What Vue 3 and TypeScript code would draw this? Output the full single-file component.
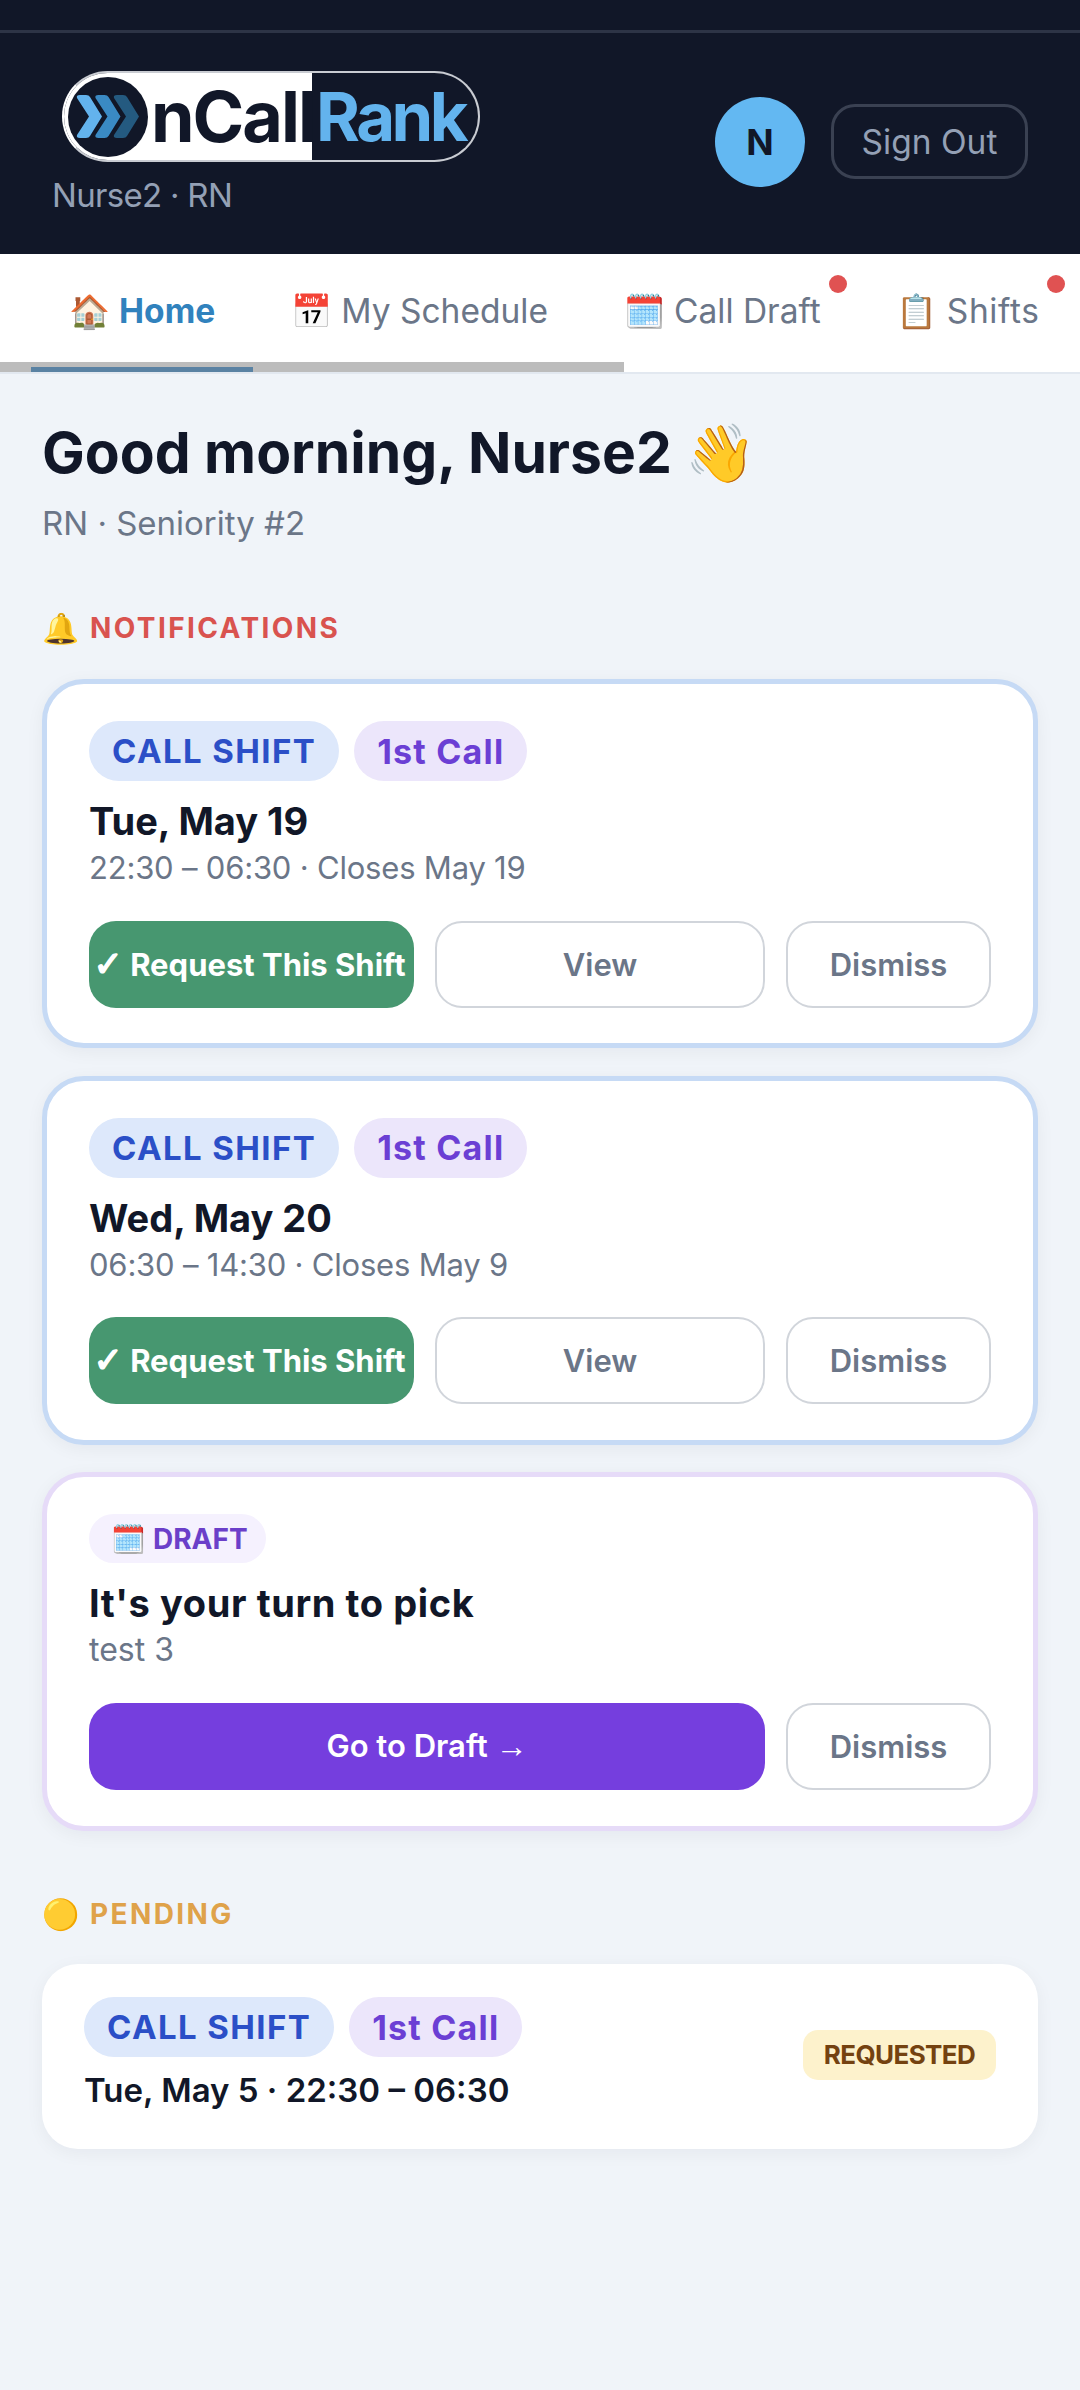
<script setup lang="ts">
interface Shift { date: string; meta: string }
const tabs = [
  { icon: '🏠', label: 'Home', active: true, dot: false },
  { icon: '📅', label: 'My Schedule', active: false, dot: false },
  { icon: '🗓️', label: 'Call Draft', active: false, dot: true },
  { icon: '📋', label: 'Shifts', active: false, dot: true },
]
const shifts: Shift[] = [
  { date: 'Tue, May 19', meta: '22:30 – 06:30 · Closes May 19' },
  { date: 'Wed, May 20', meta: '06:30 – 14:30 · Closes May 9' },
]
const chevron = 'M1 4 Q0 1 4 1 H10 Q13 1 14 3 L26 22.5 L14 42 Q13 44 10 44 H4 Q0 44 1 41 L13 22.5 Z'
</script>

<template>
  <div class="app">
    <div class="status"></div>
    <header class="header">
      <div class="brand">
        <div class="logo">
          <div class="logo-light">
            <span class="logo-mark">
              <svg width="64" height="45" viewBox="0 0 64 45">
                <path :d="chevron" transform="translate(37 0)" fill="#245a80" />
                <path :d="chevron" transform="translate(18.5 0)" fill="#3a8ac4" />
                <path :d="chevron" fill="#63b3ed" />
              </svg>
            </span>
            <span class="logo-call">nCall</span>
          </div>
          <span class="logo-rank">Rank</span>
        </div>
        <div class="who">Nurse2 · RN</div>
      </div>
      <div class="account">
        <div class="avatar">N</div>
        <button class="signout">Sign Out</button>
      </div>
    </header>

    <nav class="tabs">
      <div v-for="t in tabs" :key="t.label" class="tab" :class="{ active: t.active }">
        <span class="tab-icon">{{ t.icon }}</span>
        <span>{{ t.label }}</span>
        <i v-if="t.dot" class="dot"></i>
      </div>
      <div class="thumb"></div>
    </nav>

    <main class="main">
      <h1 class="hello">Good morning, Nurse2 <span class="wave">👋</span></h1>
      <p class="seniority">RN · Seniority #2</p>

      <h2 class="section red"><span class="section-icon">🔔</span>NOTIFICATIONS</h2>

      <section v-for="s in shifts" :key="s.date" class="card blue">
        <div class="pills">
          <span class="pill pill-type">CALL SHIFT</span>
          <span class="pill pill-call">1st Call</span>
        </div>
        <div class="title">{{ s.date }}</div>
        <div class="meta">{{ s.meta }}</div>
        <div class="actions">
          <button class="btn green"><span class="check">✓</span> Request This Shift</button>
          <button class="btn ghost view">View</button>
          <button class="btn ghost dismiss">Dismiss</button>
        </div>
      </section>

      <section class="card violet">
        <div class="pills">
          <span class="pill-draft"><span class="draft-icon">🗓️</span>DRAFT</span>
        </div>
        <div class="title draft-title">It's your turn to pick</div>
        <div class="meta draft-meta">test 3</div>
        <div class="actions">
          <button class="btn purple">Go to Draft <span class="arrow">→</span></button>
          <button class="btn ghost dismiss">Dismiss</button>
        </div>
      </section>

      <h2 class="section amber"><span class="section-icon">🟡</span>PENDING</h2>

      <section class="pending">
        <div>
          <div class="pills">
            <span class="pill pill-type">CALL SHIFT</span>
            <span class="pill pill-call">1st Call</span>
          </div>
          <div class="pending-title">Tue, May 5 · 22:30 – 06:30</div>
        </div>
        <span class="requested">REQUESTED</span>
      </section>
    </main>
  </div>
</template>

<style scoped>
.app {
  min-height: 2390px;
  background: #f0f4f9;
  font-family: Inter, "Noto Sans", "Noto Color Emoji", sans-serif;
  color: #111827;
  overflow: hidden;
}
.status {
  height: 30px;
  background: #111728;
  border-bottom: 3px solid #2d3446;
}
.header {
  height: 221px;
  background: #111728;
  display: flex;
  justify-content: space-between;
  align-items: center;
  padding: 0 52px;
  box-sizing: border-box;
}
.brand {
  align-self: flex-start;
  padding-top: 38px;
  display: flex;
  flex-direction: column;
}
.logo {
  margin-left: 10px;
  width: 418px;
  height: 91px;
  box-sizing: border-box;
  border: 2px solid #c9ccd2;
  border-left-color: #fff;
  border-radius: 46px;
  overflow: hidden;
  display: flex;
  align-items: center;
}
.logo-light {
  width: 248px;
  height: 100%;
  background: #fff;
  display: flex;
  align-items: center;
  padding-left: 4px;
  box-sizing: border-box;
  flex: none;
}
.logo-mark {
  width: 80px;
  height: 80px;
  border-radius: 50%;
  background: #111728;
  display: flex;
  align-items: center;
  justify-content: center;
  flex: none;
}
.logo-call, .logo-rank {
  font-size: 70px;
  font-weight: 700;
  line-height: 1;
  letter-spacing: -2px;
}
.logo-call { color: #111728; margin-left: 3px; }
.logo-rank { color: #63b3ed; margin-left: 4px; font-size: 67px; letter-spacing: -3.5px; }
.who {
  margin-top: 13px;
  font-size: 33px;
  line-height: 40px;
  letter-spacing: -0.7px;
  color: #94a0b5;
}
.account { display: flex; align-items: center; gap: 26px; margin-top: -4px; }
.avatar {
  width: 90px;
  height: 90px;
  border-radius: 50%;
  background: #63b8f2;
  color: #111728;
  font-size: 36px;
  font-weight: 700;
  display: flex;
  align-items: center;
  justify-content: center;
}
.signout {
  width: 197px;
  height: 75px;
  border: 3px solid #3a4152;
  border-radius: 24px;
  background: transparent;
  color: #94a0b5;
  font: 400 33.5px Inter, sans-serif;
  padding: 0;
}
.tabs {
  position: relative;
  height: 120px;
  background: #fff;
  border-bottom: 2px solid #e2e8f0;
  display: flex;
  padding-left: 31px;
  box-sizing: border-box;
  overflow: hidden;
}
.tab {
  position: relative;
  flex: none;
  height: 118px;
  box-sizing: border-box;
  padding: 0 38px 5px;
  display: flex;
  align-items: center;
  gap: 9px;
  font-size: 33.5px;
  color: #6b7688;
  white-space: nowrap;
}
.tab:nth-child(4) { letter-spacing: 0.6px; }
.tab-icon { font-size: 33px; letter-spacing: 0; }
.tab.active { color: #3182bd; font-weight: 700; }
.tab.active::after {
  content: "";
  position: absolute;
  left: 0;
  right: 0;
  bottom: 0;
  height: 5px;
  background: #5a82a3;
  z-index: 2;
}
.dot {
  position: absolute;
  top: 21px;
  right: 12px;
  width: 18px;
  height: 18px;
  border-radius: 50%;
  background: #e05252;
}
.thumb {
  position: absolute;
  left: 0;
  bottom: 0;
  width: 624px;
  height: 10px;
  background: #bcbcbc;
}
.main { padding: 0 42px; }
.hello {
  margin: 0;
  padding-top: 42px;
  font-size: 57px;
  line-height: 74px;
  font-weight: 700;
  color: #111728;
}
.wave { font-size: 57px; }
.seniority {
  margin: 12px 0 0;
  font-size: 33px;
  line-height: 42px;
  color: #6b7688;
}
.section {
  display: flex;
  align-items: center;
  margin: 0;
  font-size: 28px;
  font-weight: 700;
  letter-spacing: 2.4px;
  line-height: 40px;
}
.section-icon { width: 48px; font-size: 30px; letter-spacing: 0; }
.red { color: #d9534f; margin-top: 64px; margin-bottom: 31px; }
.amber { color: #dfa24a; margin-top: 63px; margin-bottom: 30px; }
.card {
  background: #fff;
  border: 5px solid;
  border-radius: 42px;
  box-sizing: border-box;
  padding: 37px 42px 34px;
  margin-bottom: 27.5px;
  box-shadow: 0 4px 18px rgba(17, 24, 39, 0.05);
}
.blue { border-color: #c6daf5; height: 369px; }
.violet { border-color: #e6dbf8; height: 359px; margin-bottom: 0; }
.pills { display: flex; gap: 15px; }
.pill {
  height: 60px;
  border-radius: 30px;
  box-sizing: border-box;
  padding: 0 23px;
  display: inline-flex;
  align-items: center;
  font-size: 33px;
  font-weight: 700;
}
.pill-type { background: #dde8fb; color: #2b4fc7; letter-spacing: 1.4px; }
.pill-call { background: #ece6fb; color: #6b3fd4; font-size: 34px; letter-spacing: 1.2px; }
.pill-draft {
  height: 49px;
  width: 177px;
  border-radius: 25px;
  box-sizing: border-box;
  padding-left: 22px;
  background: #f5f1fe;
  color: #6b3fc9;
  display: inline-flex;
  align-items: center;
  font-size: 28px;
  font-weight: 700;
}
.draft-icon { width: 42px; font-size: 28px; }
.title {
  margin-top: 13px;
  font-size: 38px;
  line-height: 54px;
  font-weight: 700;
  color: #111728;
}
.draft-title { letter-spacing: 0.6px; }
.meta {
  margin-top: 1px;
  font-size: 31px;
  line-height: 38px;
  letter-spacing: -0.2px;
  color: #6b7688;
}
.draft-meta { font-size: 32px; letter-spacing: 0; }
.actions { display: flex; gap: 21px; margin-top: 33.5px; }
.btn {
  height: 87px;
  border-radius: 27px;
  border: 0;
  padding: 0;
  box-sizing: border-box;
  font: 600 31px Inter, "Noto Sans", sans-serif;
  flex: none;
}
.green { width: 325px; background: #479770; color: #fff; font-weight: 700; white-space: nowrap; }
.check {
  font-family: "DejaVu Sans", sans-serif;
  font-size: 35px;
  line-height: 1;
  -webkit-text-stroke: 1.6px #fff;
  margin-left: -4px;
}
.arrow { font-family: "Liberation Sans", sans-serif; font-size: 32px; }
.purple { width: 676px; background: #753ede; color: #fff; }
.ghost { background: #fff; border: 2px solid #d1d5db; color: #6b7688; }
.view { width: 330px; }
.dismiss { width: 205px; }
.pending {
  height: 185px;
  background: #fff;
  border-radius: 36px;
  box-sizing: border-box;
  padding: 33px 42px 0;
  display: flex;
  justify-content: space-between;
  box-shadow: 0 4px 18px rgba(17, 24, 39, 0.05);
}
.pending-title {
  margin-top: 10px;
  font-size: 33px;
  line-height: 46px;
  font-weight: 600;
  color: #111728;
}
.requested {
  align-self: flex-start;
  margin-top: 33px;
  height: 50px;
  width: 193px;
  border-radius: 15px;
  background: #fdf2cc;
  color: #744210;
  font-size: 26px;
  letter-spacing: -0.6px;
  font-weight: 700;
  display: flex;
  align-items: center;
  justify-content: center;
  padding-bottom: 2px;
  box-sizing: border-box;
}
</style>

<style>
html, body { margin: 0; background: #f0f4f9; }
</style>
